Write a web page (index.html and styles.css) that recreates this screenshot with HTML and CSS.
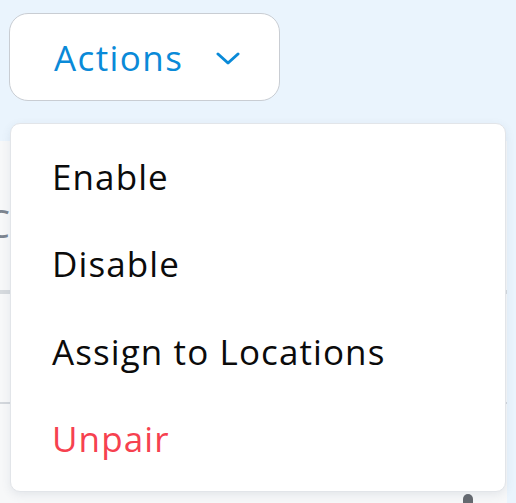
FILE: index.html
```html
<!DOCTYPE html>
<html>
<head>
<meta charset="utf-8">
<link rel="stylesheet" href="styles.css">
</head>
<body>
<div class="page">
  <div class="toolbar">
    <button class="actions-btn">
      <span>Actions</span>
      <svg class="chev" width="24" height="13" viewBox="0 0 24 13"><path d="M2 2 L12 11 L22 2" fill="none" stroke="#0a8ad8" stroke-width="3" stroke-linecap="round" stroke-linejoin="round"/></svg>
    </button>
  </div>
  <div class="card">
    <div class="row row-first"><span class="ghost">C</span></div>
    <div class="row row-second"></div>
    <div class="row row-third"><span class="dot"></span></div>
  </div>
  <ul class="menu">
    <li class="item">Enable</li>
    <li class="item">Disable</li>
    <li class="item">Assign to Locations</li>
    <li class="item danger">Unpair</li>
  </ul>
</div>
</body>
</html>
```

FILE: styles.css
```css
html, body {
  margin: 0;
  padding: 0;
  background: #eaf4fd;
  font-family: "Open Sans", "DejaVu Sans", sans-serif;
  overflow: hidden;
}
.page {
  position: relative;
  width: 516px;
  height: 503px;
  padding-top: 13px;
  box-sizing: border-box;
  overflow: hidden;
}
.toolbar {
  display: flex;
  padding-left: 9px;
}
.actions-btn {
  display: flex;
  align-items: center;
  gap: 33px;
  width: 271px;
  height: 88px;
  box-sizing: border-box;
  padding: 0 38px 0 44px;
  background: #fff;
  border: 1.5px solid #c9cdd3;
  border-radius: 19px;
  font-family: inherit;
  font-size: 35px;
  letter-spacing: 1.4px;
  color: #0a8ad8;
  line-height: 1;
}
.chev {
  display: block;
  margin-top: 2px;
}
.card {
  margin-top: 40px;
  width: 507px;
  height: 362px;
  background: #f7f8f9;
  overflow: hidden;
}
.row {
  box-sizing: border-box;
}
.row-first {
  height: 153px;
  border-bottom: 4px solid #d6dade;
  padding-top: 63px;
}
.ghost {
  display: block;
  margin-left: -14px;
  font-size: 38px;
  line-height: 1;
  color: #7d8590;
}
.row-second {
  height: 110px;
  border-bottom: 2px solid #d3d7dc;
}
.row-third {
  display: flex;
  justify-content: flex-end;
  padding: 90px 34px 0 0;
}
.dot {
  width: 10px;
  height: 9px;
  border-radius: 5px 5px 0 0;
  background: #666a70;
}
.menu {
  position: absolute;
  left: 10px;
  top: 123px;
  width: 496px;
  height: 369px;
  box-sizing: border-box;
  margin: 0;
  padding: 9px 0 8px;
  list-style: none;
  background: #fff;
  border: 1px solid #e2e5e9;
  border-radius: 10px;
  box-shadow: 0 3px 10px rgba(60, 80, 110, 0.10);
}
.item {
  height: 87.5px;
  display: flex;
  align-items: center;
  padding-left: 41px;
  font-size: 35px;
  letter-spacing: 1.1px;
  color: #0b0b0b;
  line-height: 1.362;
}
.danger {
  color: #f6414f;
}
```
